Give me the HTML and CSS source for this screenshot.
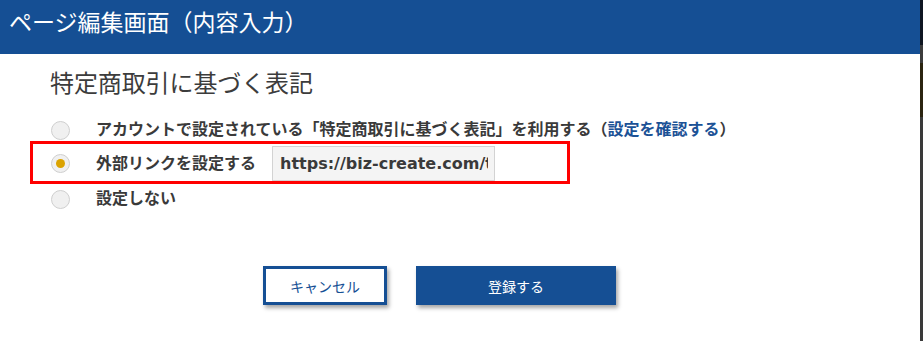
FILE: index.html
```html
<!DOCTYPE html>
<html lang="ja">
<head>
<meta charset="utf-8">
<title>ページ編集画面（内容入力）</title>
<link rel="stylesheet" href="styles.css">
</head>
<body>
<div class="app">
  <div class="main">
    <header class="header">
      <h1 class="title">ページ編集画面（内容入力）</h1>
    </header>
    <section class="content">
      <h2 class="section-title">特定商取引に基づく表記</h2>
      <div class="options">
        <div class="option option-first">
          <span class="radio"></span>
          <span class="label">アカウントで設定されている「特定商取引に基づく表記」を利用する（<a class="link" href="#">設定を確認する</a>）</span>
        </div>
        <div class="option option-marked">
          <span class="radio radio-checked"></span>
          <span class="label">外部リンクを設定する</span>
          <input class="url-input" type="text" value="https://biz-create.com/tokushoho">
        </div>
        <div class="option option-last">
          <span class="radio"></span>
          <span class="label">設定しない</span>
        </div>
      </div>
      <div class="actions">
        <button class="btn btn-cancel" type="button">キャンセル</button>
        <button class="btn btn-submit" type="button">登録する</button>
      </div>
    </section>
  </div>
  <div class="edge">
    <div class="edge-top"></div>
    <div class="edge-gap"></div>
    <div class="edge-warm"></div>
    <div class="edge-rest"></div>
  </div>
</div>
</body>
</html>
```
FILE: styles.css
```css
* { box-sizing: border-box; }
html, body {
  margin: 0;
  padding: 0;
  background: #fff;
}
body {
  font-family: "DejaVu Sans", "Noto Sans CJK JP", sans-serif;
  color: #3a3a3a;
  height: 341px;
  overflow: hidden;
}
.app {
  display: flex;
  width: 923px;
  height: 341px;
}
.main {
  flex: 1;
  min-width: 0;
  display: flex;
  flex-direction: column;
}
.header {
  height: 54px;
  background: #154f94;
  padding: 7px 0 0 9px;
}
.title {
  margin: 0;
  font-family: "Noto Sans CJK JP", sans-serif;
  font-weight: 400;
  font-size: 23px;
  line-height: 28px;
  color: #fff;
  letter-spacing: 0;
}
.content {
  padding: 13px 0 0 0;
}
.section-title {
  margin: 0 0 0 50px;
  font-family: "Noto Sans CJK JP", sans-serif;
  font-weight: 400;
  font-size: 24px;
  line-height: 30px;
  color: #3c3c3c;
  letter-spacing: -0.1px;
}
.options {
  margin-top: 19px;
  padding-left: 33px;
  display: flex;
  flex-direction: column;
}
.option {
  display: flex;
  align-items: center;
  font-size: 16px;
  font-weight: 700;
}
.option-first { height: 28px; }
.option-marked {
  width: 534px;
  height: 37px;
  padding-top: 2px;
  outline: 3px solid #ff0000;
}
.option-last { height: 36px; }
.radio {
  flex: none;
  width: 19px;
  height: 19px;
  margin-left: 18px;
  margin-right: 26px;
  border-radius: 50%;
  background: #f0f0f0;
  border: 1px solid #cfcfcf;
  display: flex;
  align-items: center;
  justify-content: center;
}
.radio-checked::after {
  content: "";
  width: 9px;
  height: 9px;
  border-radius: 50%;
  background: #dba300;
}
.label {
  line-height: 20px;
  white-space: nowrap;
  color: #3a3a3a;
}
.link {
  color: #1c5296;
  text-decoration: none;
}
.url-input {
  margin-left: 16px;
  width: 223px;
  height: 35px;
  border: 1px solid #d3d3d3;
  background: #f4f4f4;
  padding: 0 6px 0 7px;
  font-family: "DejaVu Sans", "Noto Sans CJK JP", sans-serif;
  font-size: 16px;
  font-weight: 700;
  color: #3a3a3a;
  border-radius: 0;
  outline: none;
}
.actions {
  margin-top: 49px;
  padding-left: 263px;
  display: flex;
  gap: 29px;
}
.btn {
  height: 39px;
  font-family: "Noto Sans CJK JP", sans-serif;
  font-size: 14px;
  font-weight: 400;
  box-shadow: 2px 3px 4px rgba(0, 0, 0, 0.35);
  border-radius: 0;
  cursor: pointer;
}
.btn-cancel {
  width: 124px;
  background: #fff;
  border: 3px solid #154f94;
  color: #154f94;
}
.btn-submit {
  width: 200px;
  background: #154f94;
  border: none;
  color: #fff;
}
.edge {
  flex: none;
  width: 3px;
  display: flex;
  flex-direction: column;
}
.edge-top { height: 45px; background: #0f1622; }
.edge-gap { height: 18px; background: #3c3c3c; }
.edge-warm { height: 54px; background: #2b2410; }
.edge-rest { flex: 1; background: #3a3a3a; }
```
